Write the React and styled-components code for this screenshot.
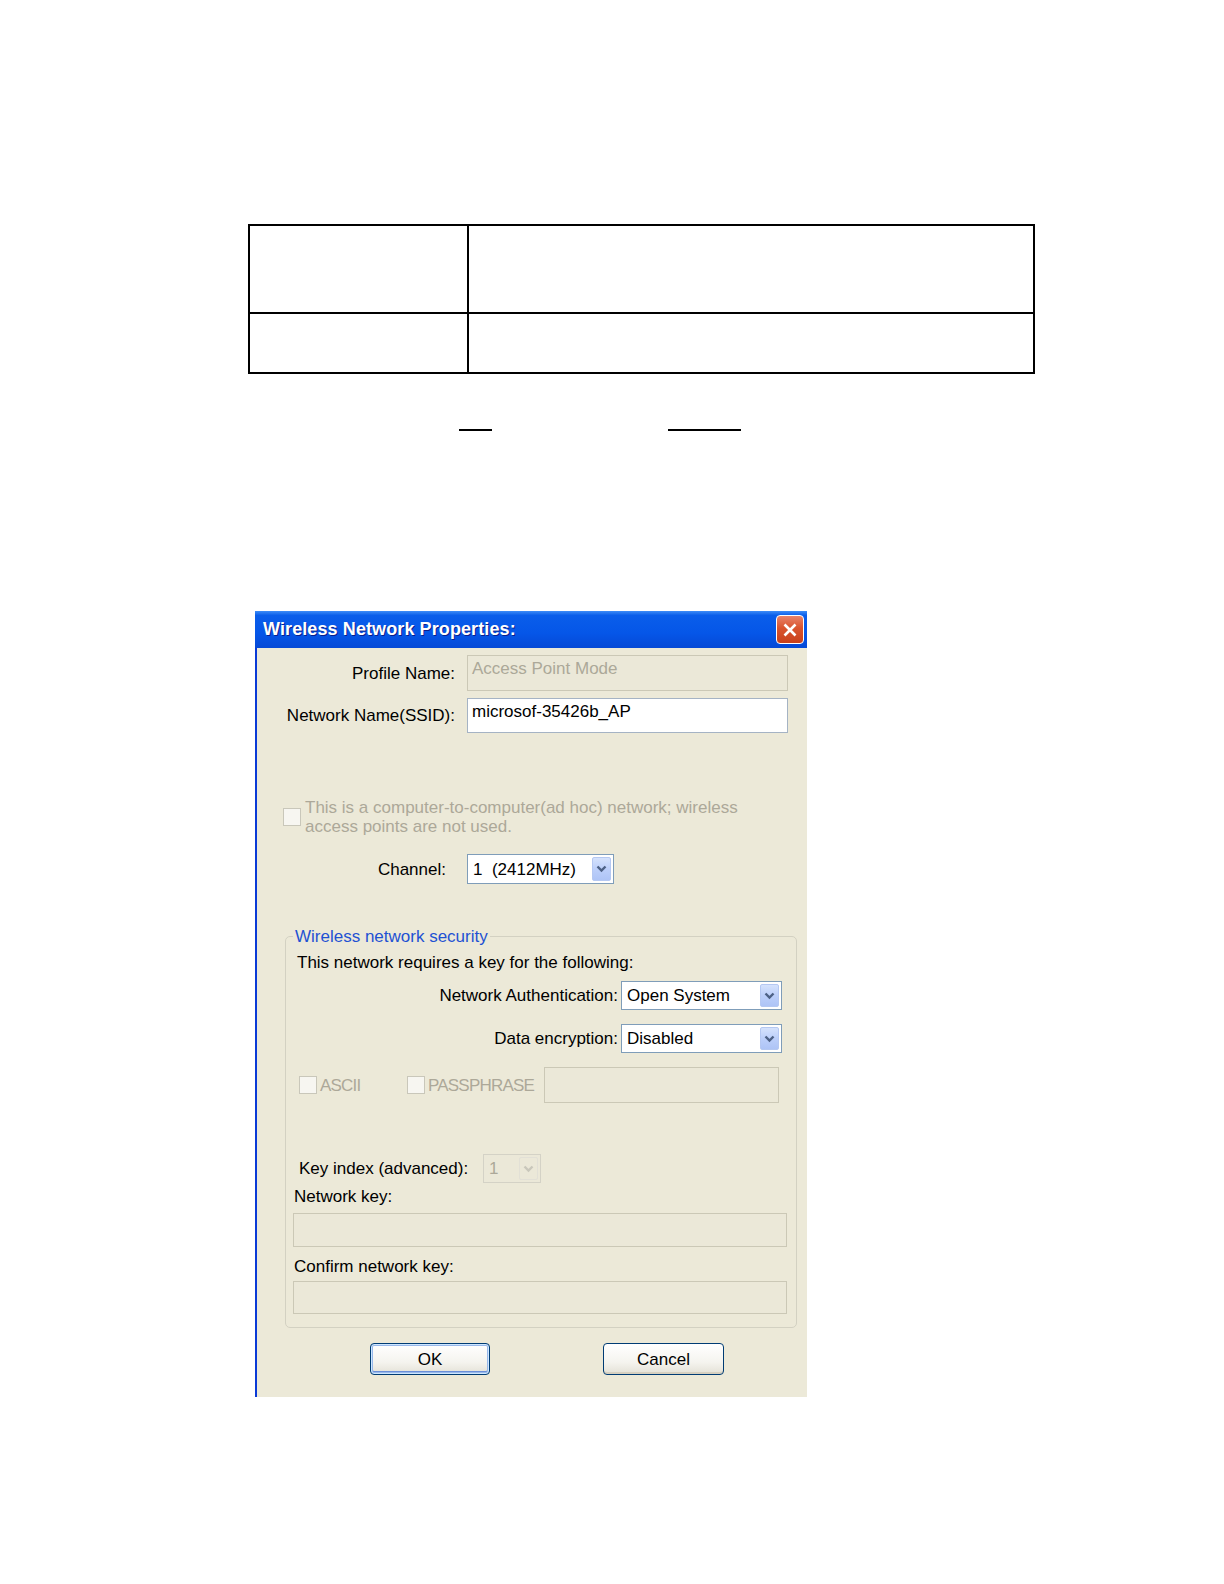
import React from 'react';
import styled, { createGlobalStyle } from 'styled-components';

const GlobalStyle = createGlobalStyle`
  html, body {
    margin: 0;
    padding: 0;
    background: #fff;
  }
`;

const Page = styled.div`
  box-sizing: border-box;
  min-height: 1584px;
  padding: 224px 0 0 248px;
  background: #fff;
`;

const DocTable = styled.table`
  width: 787px;
  border-collapse: collapse;

  td {
    border: 2px solid #000;
    padding: 0;
  }
`;

const BlankRow = styled.div`
  display: flex;
  margin-top: 55px;
  height: 2px;
`;

const Blank = styled.span`
  display: block;
  height: 2px;
  width: ${({ $w }) => $w}px;
  margin-left: ${({ $ml }) => $ml}px;
  background: #000;
`;

// xp dialog
const Dialog = styled.div`
  box-sizing: border-box;
  width: 552px;
  margin: 180px 0 0 7px;
  background: #ece9d8;
  border-left: 2px solid #0a3ad6;
  font-family: 'Liberation Sans', Arial, sans-serif;
  font-size: 17px;
  line-height: 19px;
  color: #000;
`;

const TitleBar = styled.div`
  display: flex;
  align-items: center;
  justify-content: space-between;
  height: 37px;
  margin-left: -2px;
  padding: 0 3px 0 8px;
  background: linear-gradient(
    to bottom,
    #3d8cf7 0%,
    #0a5eea 12%,
    #0556e8 60%,
    #0549d6 100%
  );
`;

const TitleText = styled.span`
  color: #fff;
  font-weight: bold;
  font-size: 18px;
  text-shadow: 1px 1px 0 #0a1f8c;
  letter-spacing: 0.1px;
`;

const CloseBtn = styled.div`
  box-sizing: border-box;
  width: 28px;
  height: 29px;
  display: flex;
  align-items: center;
  justify-content: center;
  border: 1px solid #fff;
  border-radius: 4px;
  background: linear-gradient(to bottom, #e8836a 0%, #d9542f 45%, #c8401b 100%);
`;

const Body = styled.div`
  display: flex;
  flex-direction: column;
  padding: 7px 0 22px 0;
`;

const Row = styled.div`
  display: flex;
  align-items: center;
  height: ${({ $h }) => ($h ? `${$h}px` : 'auto')};
  margin-top: ${({ $mt }) => $mt || 0}px;
  margin-left: ${({ $ml }) => $ml || 0}px;
`;

const Label = styled.span`
  display: block;
  width: ${({ $w }) => $w}px;
  margin-right: ${({ $gap }) => $gap || 0}px;
  text-align: ${({ $align }) => $align || 'right'};
  color: ${({ $disabled }) => ($disabled ? '#aca899' : '#000')};
  white-space: nowrap;
  flex-shrink: 0;
`;

const TextBox = styled.div`
  box-sizing: border-box;
  width: ${({ $w }) => $w}px;
  height: ${({ $h }) => $h}px;
  margin-left: ${({ $ml }) => $ml || 0}px;
  margin-top: ${({ $mt }) => $mt || 0}px;
  padding: 3px 4px;
  border: 1px solid ${({ $disabled }) => ($disabled ? '#cbc8b6' : '#a5b3c4')};
  background: ${({ $disabled }) => ($disabled ? '#ebe8d8' : '#fff')};
  color: ${({ $disabled }) => ($disabled ? '#aca899' : '#000')};
  white-space: nowrap;
  flex-shrink: 0;
`;

const SelectBox = styled.div`
  box-sizing: border-box;
  display: flex;
  align-items: center;
  justify-content: space-between;
  width: ${({ $w }) => $w}px;
  height: ${({ $h }) => $h}px;
  padding: 2px 2px 2px 5px;
  border: 1px solid ${({ $disabled }) => ($disabled ? '#d4d2c6' : '#7f9db9')};
  background: ${({ $disabled }) => ($disabled ? '#ebe8d8' : '#fff')};
  color: ${({ $disabled }) => ($disabled ? '#aca899' : '#000')};
  white-space: pre;
  flex-shrink: 0;
`;

const DropBtn = styled.span`
  box-sizing: border-box;
  display: flex;
  align-items: center;
  justify-content: center;
  width: 19px;
  align-self: stretch;
  border-radius: 2px;
  background: ${({ $disabled }) =>
    $disabled
      ? '#ebe8d8'
      : 'linear-gradient(to bottom, #d5e2fc 0%, #bccffa 50%, #aec4f6 100%)'};
  border: 1px solid ${({ $disabled }) => ($disabled ? '#e2e0d6' : '#b5c8f2')};
`;

const Check = styled.span`
  box-sizing: border-box;
  display: block;
  width: 18px;
  height: 18px;
  flex-shrink: 0;
  border: 1px solid #c9c7ba;
  background: #f7f6f1;
  margin-left: ${({ $ml }) => $ml || 0}px;
  margin-right: ${({ $mr }) => $mr || 0}px;
`;

const Muted = styled.span`
  color: #aca899;
  white-space: nowrap;
  flex-shrink: 0;
  width: ${({ $w }) => ($w ? `${$w}px` : 'auto')};
  letter-spacing: ${({ $tight }) => ($tight ? '-0.8px' : 'normal')};
`;

const Group = styled.fieldset`
  box-sizing: border-box;
  width: 512px;
  margin: 43px 0 0 28px;
  padding: 0 10px 13px 7px;
  border: 1px solid #d3d1c2;
  border-radius: 5px;
  min-width: 0;
`;

const Legend = styled.legend`
  padding: 0 2px;
  color: #1f52d3;
  line-height: 19px;
`;

const Plain = styled.div`
  margin-top: ${({ $mt }) => $mt || 0}px;
  margin-left: ${({ $ml }) => $ml || 0}px;
  white-space: nowrap;
`;

const Button = styled.div`
  box-sizing: border-box;
  display: flex;
  align-items: center;
  justify-content: center;
  width: ${({ $w }) => $w}px;
  height: 32px;
  margin-left: ${({ $ml }) => $ml}px;
  border: 1px solid #003c74;
  border-radius: 4px;
  background: linear-gradient(to bottom, #ffffff 0%, #f5f4ef 60%, #e3e1d6 100%);
  box-shadow: ${({ $default }) =>
    $default
      ? 'inset 0 0 0 1px #cee7ff, inset 0 0 0 2px #98b8ea, inset 0 -1px 0 2px #6a8fd8'
      : 'inset 0 -2px 0 #d6d0c0'};
  color: #000;
`;

const Chevron = ({ disabled }) => (
  <svg width="11" height="8" viewBox="0 0 11 8">
    <path
      d="M1.5 1.5 L5.5 5.5 L9.5 1.5"
      fill="none"
      stroke={disabled ? '#c9c7bb' : '#4d6185'}
      strokeWidth="2.4"
    />
  </svg>
);

const Select = ({ w, h, value, disabled }) => (
  <SelectBox $w={w} $h={h} $disabled={disabled}>
    <span>{value}</span>
    <DropBtn $disabled={disabled}>
      <Chevron disabled={disabled} />
    </DropBtn>
  </SelectBox>
);

const App = () => (
  <>
    <GlobalStyle />
    <Page>
      <DocTable>
        <tbody>
          <tr style={{ height: 88 }}>
            <td style={{ width: 217 }} />
            <td />
          </tr>
          <tr style={{ height: 60 }}>
            <td />
            <td />
          </tr>
        </tbody>
      </DocTable>

      <BlankRow>
        <Blank $ml={211} $w={33} />
        <Blank $ml={176} $w={73} />
      </BlankRow>

      <Dialog>
        <TitleBar>
          <TitleText>Wireless Network Properties:</TitleText>
          <CloseBtn>
            <svg width="16" height="16" viewBox="0 0 16 16">
              <path d="M2.5 2.5 L13.5 13.5 M13.5 2.5 L2.5 13.5" stroke="#fff" strokeWidth="2.6" />
            </svg>
          </CloseBtn>
        </TitleBar>

        <Body>
          <Row $h={36} $mt={0}>
            <Label $w={198} $gap={12}>Profile Name:</Label>
            <TextBox $w={321} $h={36} $disabled>Access Point Mode</TextBox>
          </Row>
          <Row $h={35} $mt={7}>
            <Label $w={198} $gap={12}>Network Name(SSID):</Label>
            <TextBox $w={321} $h={35}>microsof-35426b_AP</TextBox>
          </Row>

          <Row $mt={65} $ml={26}>
            <Check $mr={4} />
            <Muted>
              This is a computer-to-computer(ad hoc) network; wireless
              <br />
              access points are not used.
            </Muted>
          </Row>

          <Row $h={30} $mt={18}>
            <Label $w={189} $gap={21}>Channel:</Label>
            <Select w={147} h={30} value="1  (2412MHz)" />
          </Row>

          <Group>
            <Legend>Wireless network security</Legend>
            <Plain $mt={7} $ml={4}>This network requires a key for the following:</Plain>

            <Row $h={29} $mt={9}>
              <Label $w={325} $gap={3}>Network Authentication:</Label>
              <Select w={161} h={29} value="Open System" />
            </Row>
            <Row $h={29} $mt={14}>
              <Label $w={325} $gap={3}>Data encryption:</Label>
              <Select w={161} h={29} value="Disabled" />
            </Row>

            <Row $h={36} $mt={14}>
              <Check $ml={6} $mr={3} />
              <Muted $w={87} $tight>ASCII</Muted>
              <Check $mr={3} />
              <Muted $w={116} $tight>PASSPHRASE</Muted>
              <TextBox $w={235} $h={36} $disabled />
            </Row>

            <Row $h={29} $mt={51} $ml={6}>
              <Label $w={178} $gap={6} $align="left">Key index (advanced):</Label>
              <Select w={58} h={29} value="1" disabled />
            </Row>

            <Plain $mt={4} $ml={1}>Network key:</Plain>
            <TextBox $w={494} $h={34} $mt={7} $disabled />

            <Plain $mt={10} $ml={1}>Confirm network key:</Plain>
            <TextBox $w={494} $h={33} $mt={5} $disabled />
          </Group>

          <Row $mt={15}>
            <Button $w={120} $ml={113} $default>OK</Button>
            <Button $w={121} $ml={113}>Cancel</Button>
          </Row>
        </Body>
      </Dialog>
    </Page>
  </>
);

export default App;
